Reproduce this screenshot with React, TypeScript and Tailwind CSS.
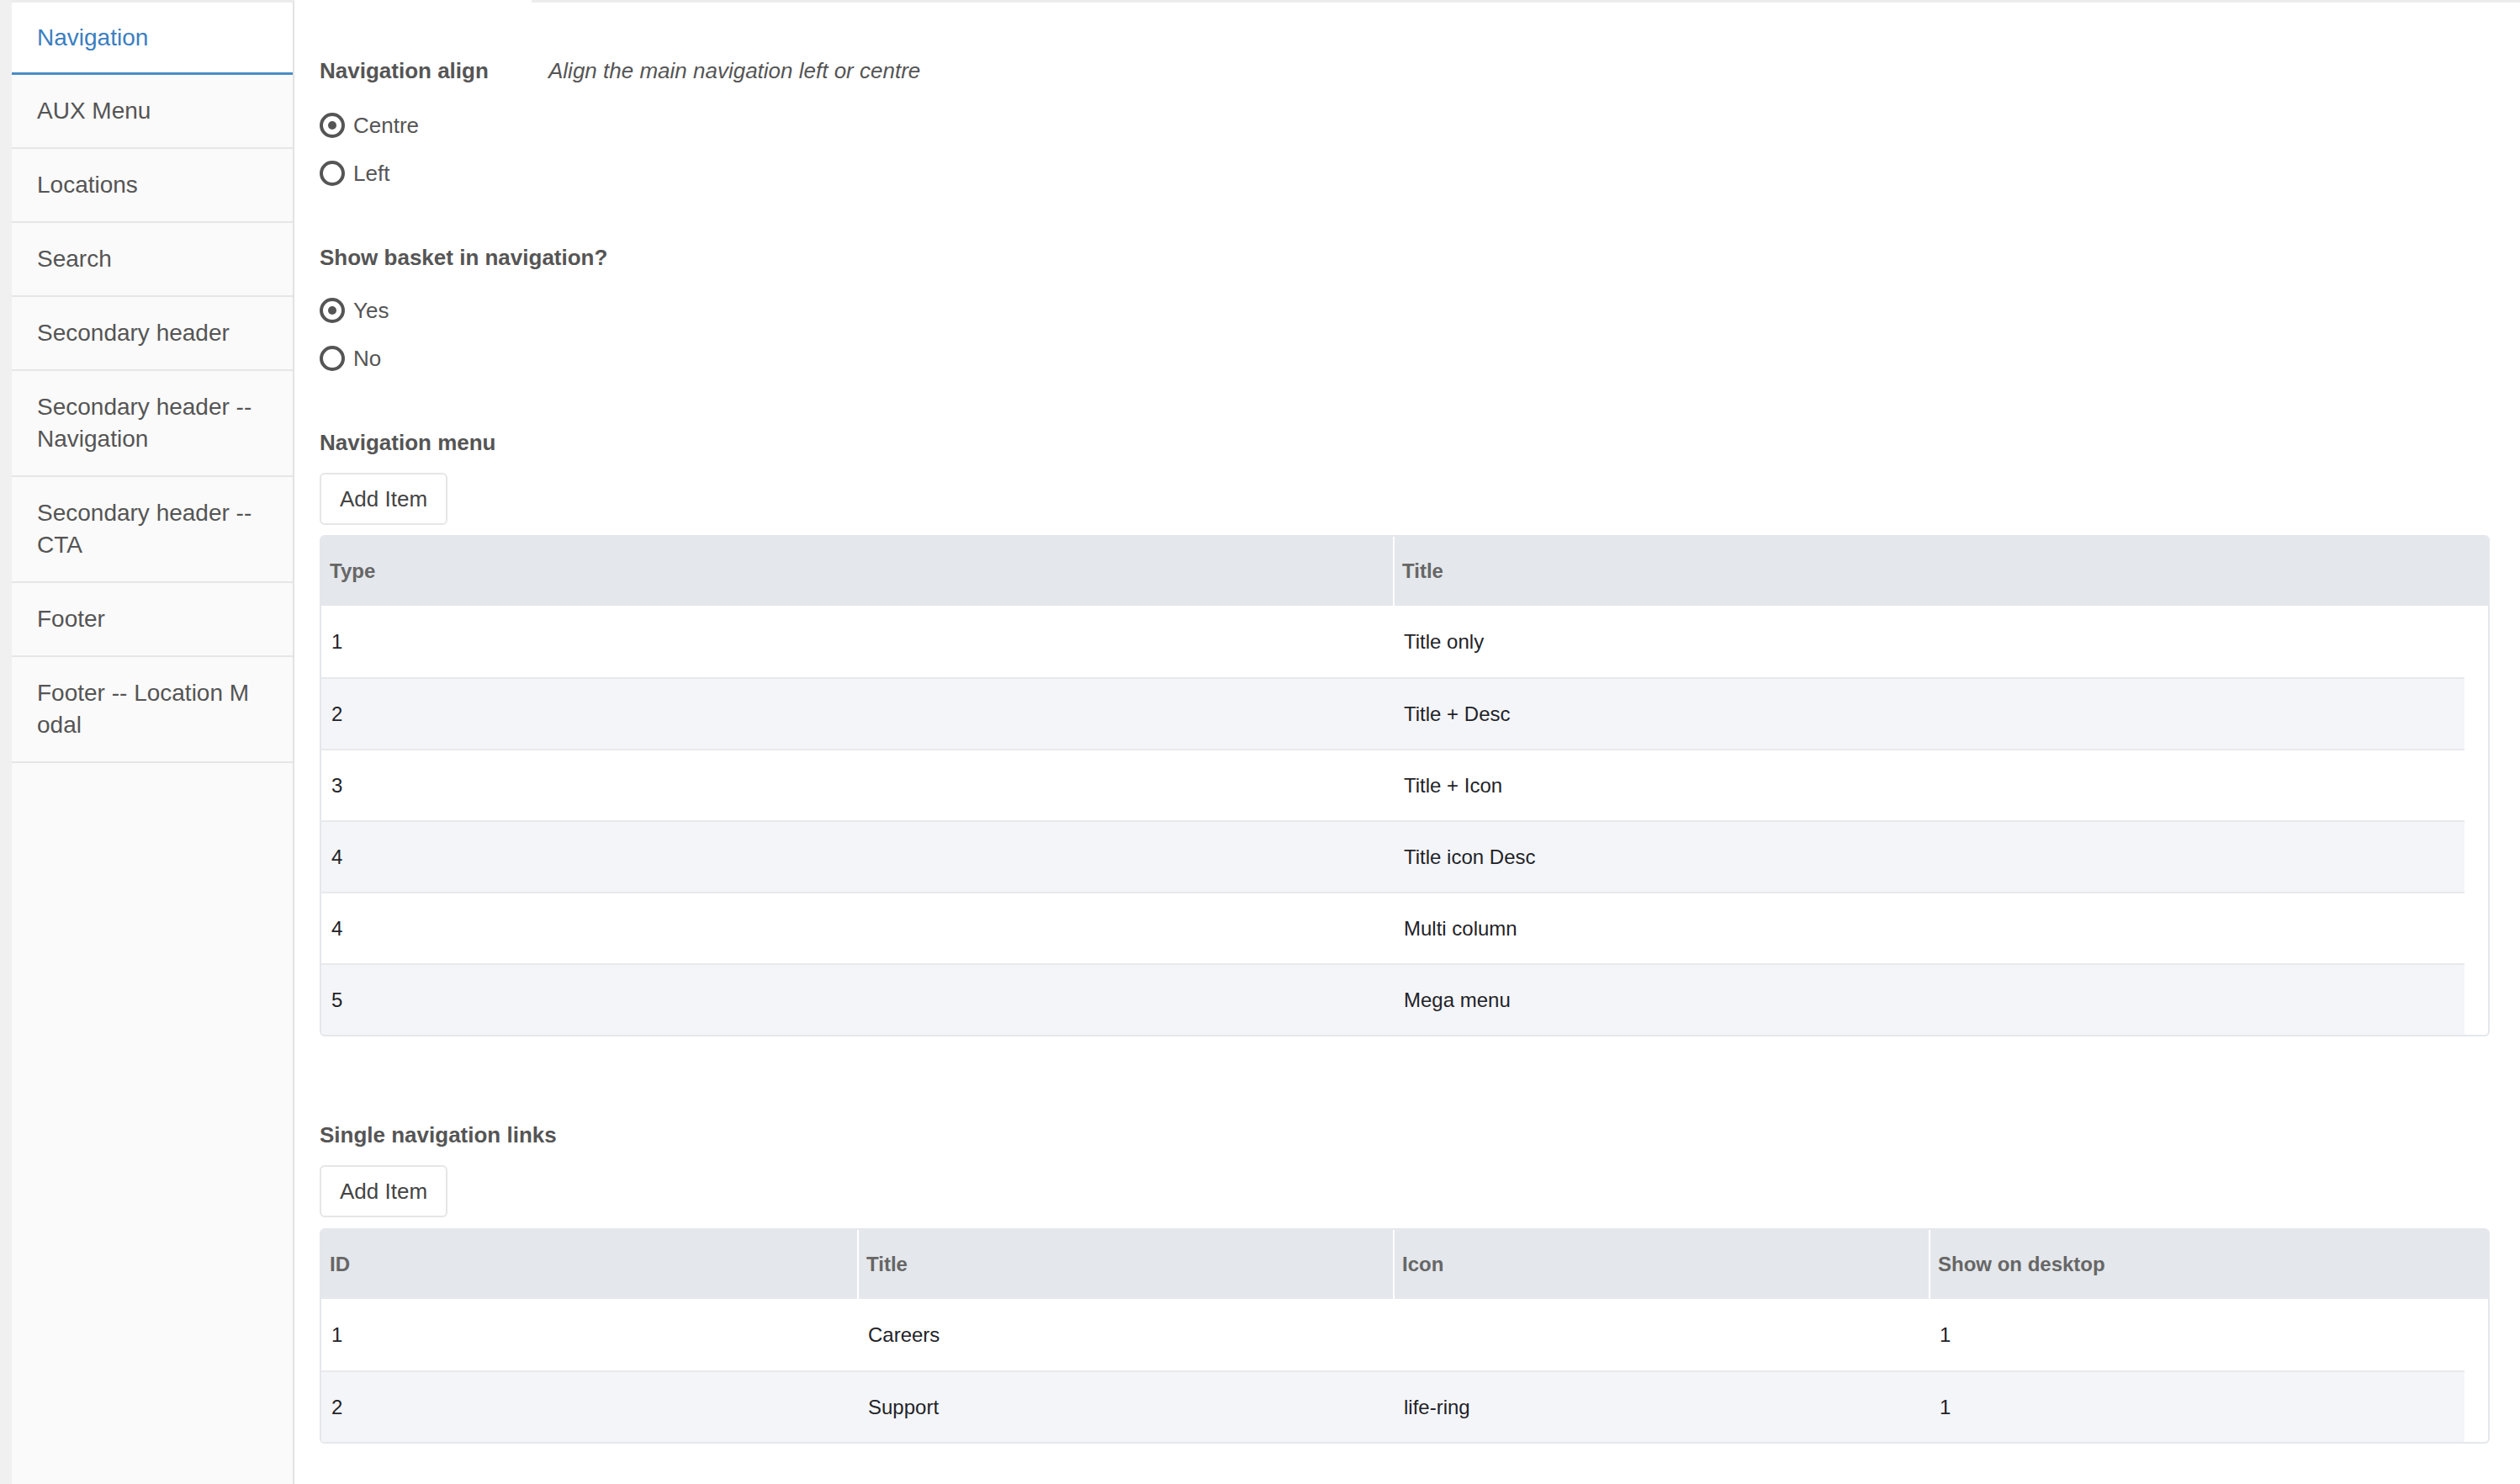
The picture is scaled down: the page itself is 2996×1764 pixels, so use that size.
import React from "react";

const navItems: { label: React.ReactNode; key: string; active?: boolean }[] = [
  { key: "nav", label: "Navigation", active: true },
  { key: "aux", label: "AUX Menu" },
  { key: "loc", label: "Locations" },
  { key: "search", label: "Search" },
  { key: "sec", label: "Secondary header" },
  { key: "secnav", label: "Secondary header -- Navigation" },
  { key: "seccta", label: "Secondary header -- CTA" },
  { key: "footer", label: "Footer" },
  {
    key: "footloc",
    label: (
      <>
        Footer -- Location M<br />
        odal
      </>
    ),
  },
];

function Radio({ label, checked }: { label: string; checked?: boolean }) {
  return (
    <div className="flex h-[57px] items-center gap-[10px]">
      <span className="flex h-[30px] w-[30px] items-center justify-center rounded-full border-[4px] border-[#555]">
        {checked ? <span className="h-[10px] w-[10px] rounded-full bg-[#555]" /> : null}
      </span>
      <span className="text-[26px] leading-[36px] text-[#555]">{label}</span>
    </div>
  );
}

function AddItem() {
  return (
    <button className="h-[62px] whitespace-nowrap rounded-[6px] border-2 border-[#e6e6e6] bg-white px-[22px] text-left text-[26px] leading-[36px] text-[#444]">
      Add Item
    </button>
  );
}

function DataTable({ headers, rows }: { headers: string[]; rows: string[][] }) {
  const cols = headers.length === 2 ? "grid-cols-2" : "grid-cols-4";
  return (
    <div className="overflow-hidden rounded-[6px] border-2 border-[#e4e7eb] bg-white">
      <div className={`grid ${cols} h-[82px] bg-[#e4e7eb] pr-[28px]`}>
        {headers.map((h, i) => (
          <div
            key={h}
            className={
              i === 0
                ? "flex items-center px-[10px] text-[24px] font-bold text-[#666]"
                : "flex items-center border-l-2 border-white px-[9px] text-[24px] font-bold text-[#666]"
            }
          >
            {h}
          </div>
        ))}
      </div>
      <div className="mr-[28px]">
        {rows.map((r, ri) => (
          <div
            key={ri}
            className={
              ri % 2 === 1
                ? `grid ${cols} h-[85px] border-t-2 border-[#e8e9ec] bg-[#f4f5f9]`
                : ri === 0
                ? `grid ${cols} h-[85px] bg-white`
                : `grid ${cols} h-[85px] border-t-2 border-[#e8e9ec] bg-white`
            }
          >
            {r.map((c, ci) => (
              <div
                key={ci}
                className={
                  ci === 0
                    ? "flex items-center px-[12px] text-[24px] text-[#1f2328]"
                    : "flex items-center px-[13px] text-[24px] text-[#1f2328]"
                }
              >
                {c}
              </div>
            ))}
          </div>
        ))}
      </div>
    </div>
  );
}

export default function App() {
  return (
    <div className="flex min-h-[1764px] bg-white font-['Liberation_Sans',Arial,sans-serif]">
      <div className="w-[14px] shrink-0 bg-[#f0f0f0]" />
      <aside className="w-[336px] shrink-0 border-r-2 border-t-[3px] border-r-[#e2e2e2] border-t-[#ececec] bg-[#fafafa]">
        {navItems.map((it) =>
          it.active ? (
            <div
              key={it.key}
              className="border-b-[3px] border-[#4a8cc6] bg-white px-[30px] pb-[22px] pt-[23px] text-[28px] leading-[38px] text-[#3a7ebf]"
            >
              {it.label}
            </div>
          ) : (
            <div
              key={it.key}
              className="border-b-2 border-[#e6e6e6] px-[30px] py-[24px] text-[28px] leading-[38px] text-[#555]"
            >
              {it.label}
            </div>
          )
        )}
      </aside>
      <main className="flex min-w-0 flex-1 flex-col">
        <div className="flex h-[3px]">
          <div className="w-[282px] bg-white" />
          <div className="flex-1 bg-[#ececec]" />
        </div>
        <div className="pl-[30px] pr-[36px] pt-[63px]">
          <div className="flex h-[36px] items-center">
            <div className="w-[272px] text-[26px] font-bold leading-[36px] text-[#555]">Navigation align</div>
            <div className="text-[26px] italic leading-[36px] text-[#555]">Align the main navigation left or centre</div>
          </div>
          <div className="mt-[18px]">
            <Radio label="Centre" checked />
            <Radio label="Left" />
          </div>
          <div className="mt-[54px] h-[36px] text-[26px] font-bold leading-[36px] text-[#555]">
            Show basket in navigation?
          </div>
          <div className="mt-[16px]">
            <Radio label="Yes" checked />
            <Radio label="No" />
          </div>
          <div className="mt-[54px] h-[36px] text-[26px] font-bold leading-[36px] text-[#555]">Navigation menu</div>
          <div className="mt-[18px]">
            <AddItem />
          </div>
          <div className="mt-[12px]">
            <DataTable
              headers={["Type", "Title"]}
              rows={[
                ["1", "Title only"],
                ["2", "Title + Desc"],
                ["3", "Title + Icon"],
                ["4", "Title icon Desc"],
                ["4", "Multi column"],
                ["5", "Mega menu"],
              ]}
            />
          </div>
          <div className="mt-[99px] h-[36px] text-[26px] font-bold leading-[36px] text-[#555]">
            Single navigation links
          </div>
          <div className="mt-[18px]">
            <AddItem />
          </div>
          <div className="mt-[13px]">
            <DataTable
              headers={["ID", "Title", "Icon", "Show on desktop"]}
              rows={[
                ["1", "Careers", "", "1"],
                ["2", "Support", "life-ring", "1"],
              ]}
            />
          </div>
        </div>
      </main>
    </div>
  );
}
